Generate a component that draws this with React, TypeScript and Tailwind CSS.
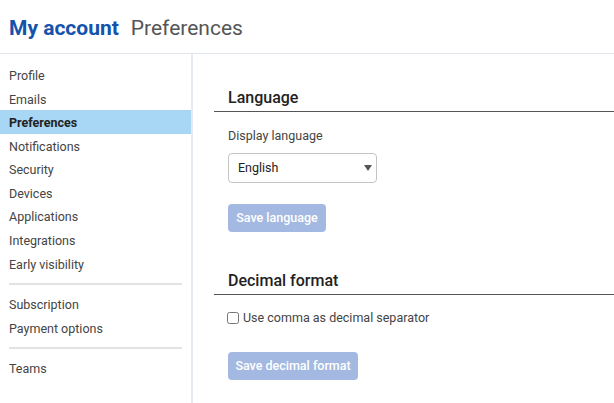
import { useState } from "react";

const navGroups = [
  ["Profile", "Emails", "Preferences", "Notifications", "Security", "Devices", "Applications", "Integrations", "Early visibility"],
  ["Subscription", "Payment options"],
  ["Teams"],
];

export default function App() {
  const [lang, setLang] = useState("English");
  const [comma, setComma] = useState(false);

  return (
    <div className="flex h-[403px] w-[614px] flex-col overflow-hidden bg-white font-['Roboto',sans-serif] text-[#333]">
      {/* Page title */}
      <header className="flex h-[54px] shrink-0 items-center gap-[12px] border-b border-[#e1e6ed] px-[9px] pt-[4px]">
        <h1 className="text-[21px] font-bold text-[#1553ab]">My account</h1>
        <span className="text-[21px] text-[#555]">Preferences</span>
      </header>

      <div className="flex min-h-0 flex-1">
        {/* Side navigation */}
        <nav className="w-[193px] shrink-0 border-r-2 border-[#e6ebf2] pt-[9px]">
          {navGroups.map((group, gi) => (
            <div key={gi}>
              {gi > 0 && <div className="mx-[9px] my-[7.5px] h-[2px] bg-[#e2e2e2]" />}
              {group.map((item) => {
                const active = item === "Preferences";
                return (
                  <div
                    key={item}
                    className={
                      active
                        ? "flex h-[23.6px] items-center bg-[#a7d7f4] px-[9px] pt-[3px] text-[12.5px] font-bold text-[#222]"
                        : "flex h-[23.6px] items-center px-[9px] pt-[3px] text-[12.5px] text-[#444]"
                    }
                  >
                    {item}
                  </div>
                );
              })}
            </div>
          ))}
        </nav>

        {/* Main content */}
        <main className="flex-1 pl-[21px] pt-[32px]">
          <h2 className="border-b border-[#555] pb-[1px] pl-[14px] text-[16px] leading-[24px] font-medium text-[#222]">
            Language
          </h2>
          <div className="pl-[14px]">
            <div className="mt-[15px] text-[12.5px] leading-[18px] text-[#444]">Display language</div>
            <div className="relative mt-[8px] w-[149px]">
              <select
                value={lang}
                onChange={(e) => setLang(e.target.value)}
                className="h-[30px] w-full appearance-none rounded-[4px] border border-[#c4c4c4] bg-white pl-[9px] text-[12.5px] text-[#222] outline-none"
              >
                <option>English</option>
                <option>Deutsch</option>
                <option>Français</option>
              </select>
              <svg className="pointer-events-none absolute right-[5px] top-[12px]" width="8" height="6" viewBox="0 0 8 6">
                <path d="M0 0h8L4 6z" fill="#555" />
              </svg>
            </div>
            <button
              disabled
              className="mt-[21px] h-[28px] w-[98px] rounded-[4px] bg-[#a3b9e1] text-[12.5px] font-medium text-white"
            >
              Save language
            </button>
          </div>

          <h2 className="mt-[36px] border-b border-[#555] pb-[0px] pl-[14px] text-[16px] leading-[26px] font-medium text-[#222]">
            Decimal format
          </h2>
          <div className="pl-[13px]">
            <label className="mt-[14px] flex h-[18px] items-center gap-[4px] text-[12.5px] text-[#444]">
              <input
                type="checkbox"
                checked={comma}
                onChange={(e) => setComma(e.target.checked)}
                className="m-0 h-[12px] w-[12px] accent-[#1553ab]"
              />
              Use comma as decimal separator
            </label>
            <button
              disabled
              className="ml-[1px] mt-[25px] h-[28px] w-[130px] rounded-[4px] bg-[#a3b9e1] text-[12.5px] font-medium text-white"
            >
              Save decimal format
            </button>
          </div>
        </main>
      </div>
    </div>
  );
}
